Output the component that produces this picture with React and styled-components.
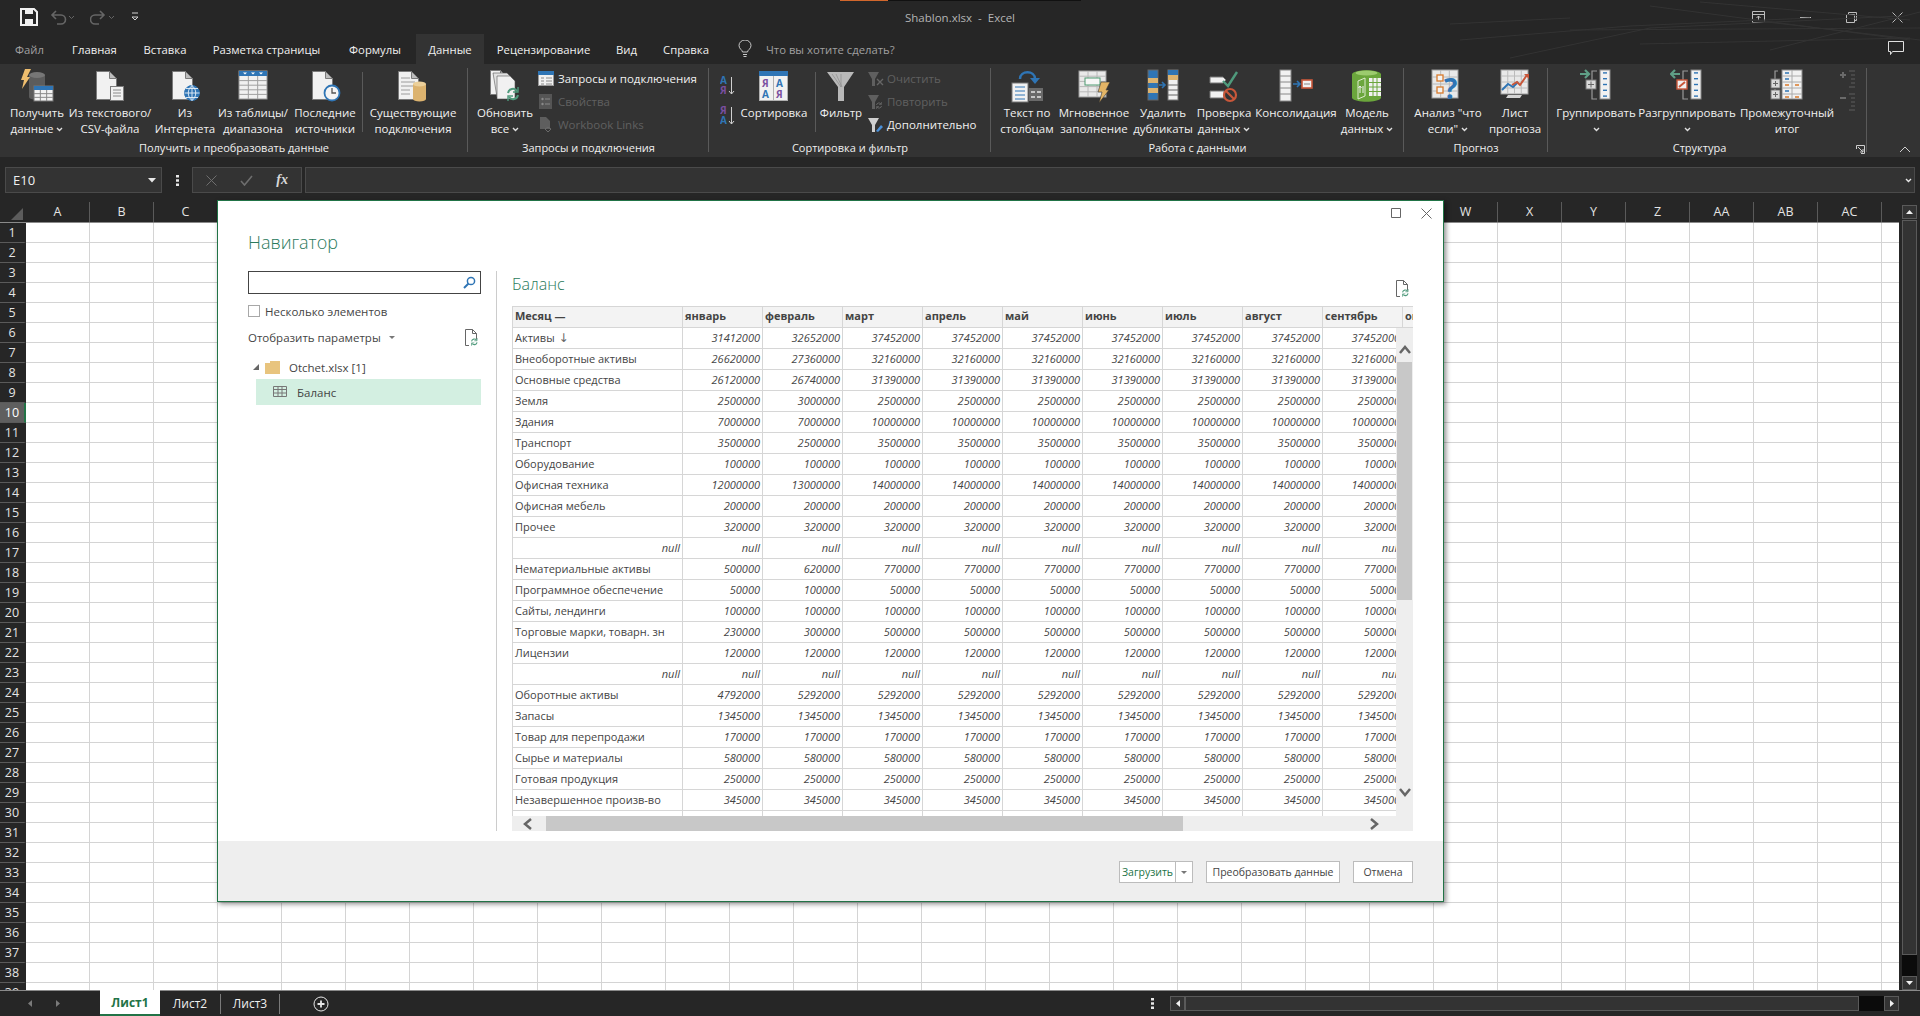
import React from 'react';
import styled, { createGlobalStyle } from 'styled-components';

const GlobalStyle = createGlobalStyle`
  html, body { margin: 0; padding: 0; background: #262626; }
  * { box-sizing: border-box; }
`;

const Window = styled.div`
  position: relative;
  width: 1920px;
  height: 1016px;
  overflow: hidden;
  display: flex;
  flex-direction: column;
  background: #262626;
  color: #f0f0f0;
  font-family: 'Open Sans', 'Noto Sans', sans-serif;
  font-size: 12px;
`;

/* title bar */
const TitleBar = styled.div`
  position: relative;
  height: 34px;
  flex: none;
  display: grid;
  grid-template-columns: 1fr auto 1fr;
  align-items: center;
`;

const QuickAccess = styled.div`
  display: flex;
  align-items: center;
  padding-left: 20px;
`;

const QuickSlot = styled.div`
  width: ${p => p.$w}px;
  flex: none;
  display: flex;
`;

const FileName = styled.div`
  color: #b4b4b4;
  font-size: 11.5px;
  white-space: pre;
`;

const WindowControls = styled.div`
  display: flex;
  justify-content: flex-end;
  align-items: center;
  gap: 35px;
  padding-right: 17px;
`;

const AccentLine = styled.div`
  position: absolute;
  left: 840px;
  top: 0;
  width: 241px;
  height: 1px;
  background: linear-gradient(to right, #d2672c 48px, #111 48px);
`;

const Texture = styled.svg`
  position: absolute;
  right: 0;
  top: 0;
  pointer-events: none;
`;

/* tabs */
const TabRow = styled.div`
  height: 30px;
  flex: none;
  display: flex;
  align-items: stretch;
  padding-left: 1px;
  font-size: 11.3px;
`;

const Tab = styled.div`
  width: ${p => p.$w}px;
  flex: none;
  display: flex;
  align-items: center;
  justify-content: center;
  white-space: nowrap;
  color: ${p => (p.$muted ? '#a0a0a0' : '#f0f0f0')};
  background: ${p => (p.$active ? '#333333' : 'transparent')};
`;

const TellMe = styled.div`
  display: flex;
  align-items: center;
  gap: 14px;
  margin-left: 16px;
  color: #a0a0a0;
`;

const CommentBox = styled.div`
  margin-left: auto;
  padding-right: 16px;
  display: flex;
  align-items: center;
`;

/* ribbon */
const Ribbon = styled.div`
  position: relative;
  height: 93px;
  flex: none;
  display: flex;
  background: #333333;
`;

const Group = styled.div`
  position: relative;
  width: ${p => p.$w}px;
  flex: none;
  display: flex;
  flex-direction: column;
  padding-top: 3px;
  &::after {
    content: '';
    position: absolute;
    right: 0;
    top: 4px;
    bottom: 5px;
    width: 1px;
    background: #5a5a5a;
  }
`;

const GroupBody = styled.div`
  height: 73px;
  display: flex;
  flex: none;
`;

const GroupLabel = styled.div`
  height: 16px;
  line-height: 16px;
  text-align: center;
  white-space: nowrap;
  font-size: 11px;
  padding-right: ${p => p.$pr || 0}px;
`;

const RibbonButton = styled.div`
  width: ${p => p.$w}px;
  margin-left: ${p => p.$ml || 0}px;
  flex: none;
  display: flex;
  flex-direction: column;
  align-items: center;
`;

const BigIcon = styled.div`
  height: 38px;
  flex: none;
  display: flex;
  align-items: center;
  justify-content: center;
`;

const ButtonLine = styled.div`
  height: 16px;
  line-height: 16px;
  white-space: nowrap;
  font-size: 11.5px;
  display: flex;
  align-items: center;
  gap: 3px;
`;

const RibbonDivider = styled.div`
  width: 1px;
  height: 60px;
  margin: 5px 0 0 ${p => p.$ml || 0}px;
  flex: none;
  background: #5a5a5a;
`;

const SmallStack = styled.div`
  display: flex;
  flex-direction: column;
  margin-left: ${p => p.$ml || 0}px;
  flex: none;
`;

const SmallRow = styled.div`
  height: 23px;
  display: flex;
  align-items: center;
  gap: ${p => p.$gap || 3}px;
  white-space: nowrap;
  font-size: 11.5px;
  color: ${p => (p.$off ? '#606060' : '#f0f0f0')};
`;

const SortPair = styled.div`
  width: 29px;
  margin-left: 4px;
  flex: none;
  display: flex;
  flex-direction: column;
  align-items: center;
  gap: 8px;
  padding-top: 8px;
`;

const Launcher = styled.div`
  position: absolute;
  right: 2px;
  bottom: 3px;
  display: flex;
`;

const Collapse = styled.div`
  position: absolute;
  left: 1899px;
  bottom: 4px;
  display: flex;
`;

/* formula bar */
const FormulaRow = styled.div`
  height: 26px;
  margin: 10px 0 9px;
  padding: 0 5px;
  flex: none;
  display: flex;
  align-items: stretch;
`;

const NameBox = styled.div`
  width: 157px;
  display: flex;
  align-items: center;
  justify-content: space-between;
  padding: 0 5px 0 7px;
  background: #333333;
  border: 1px solid #4a4a4a;
  font-size: 13px;
`;

const VDots = styled.div`
  width: 30px;
  display: flex;
  align-items: center;
  justify-content: center;
`;

const FxBox = styled.div`
  width: 110px;
  display: flex;
  align-items: center;
  justify-content: space-between;
  padding: 0 13px;
  background: #333333;
  border: 1px solid #4a4a4a;
`;

const FxLabel = styled.span`
  font-family: 'Liberation Serif', serif;
  font-style: italic;
  font-weight: 700;
  font-size: 14px;
  color: #d8d8d8;
`;

const FormulaInput = styled.div`
  flex: 1;
  margin-left: 3px;
  background: #333333;
  border: 1px solid #4a4a4a;
  display: flex;
  align-items: center;
  justify-content: flex-end;
  padding-right: 2px;
`;

/* sheet */
const SheetArea = styled.div`
  flex: 1;
  min-height: 0;
  display: flex;
`;

const SheetMain = styled.div`
  flex: 1;
  min-width: 0;
  display: flex;
  flex-direction: column;
`;

const ColHeadRow = styled.div`
  height: 21px;
  flex: none;
  display: flex;
  border-bottom: 1px solid #8a8a8a;
`;

const Corner = styled.div`
  width: 26px;
  flex: none;
  display: flex;
  justify-content: flex-end;
  align-items: flex-end;
  padding: 0 3px 2px 0;
`;

const ColHead = styled.div`
  width: 64px;
  flex: none;
  text-align: center;
  line-height: 19px;
  font-size: 12.5px;
  color: #e4e4e4;
  border-right: 1px solid #5a5a5a;
`;

const GridRow = styled.div`
  flex: 1;
  min-height: 0;
  display: flex;
  overflow: hidden;
`;

const RowHeads = styled.div`
  width: 26px;
  flex: none;
`;

const RowHead = styled.div`
  height: 20px;
  text-align: center;
  line-height: 19px;
  font-size: 12.5px;
  color: ${p => (p.$active ? '#ffffff' : '#e4e4e4')};
  border-bottom: 1px solid #5a5a5a;
  border-right: 2px solid ${p => (p.$active ? '#217346' : 'transparent')};
  background: ${p => (p.$active ? '#5f5f5f' : 'transparent')};
`;

const Cells = styled.div`
  flex: 1;
  background-color: #ffffff;
  background-image:
    linear-gradient(to right, #d4d4d4 1px, transparent 1px),
    linear-gradient(to bottom, #d4d4d4 1px, transparent 1px);
  background-size: 64px 20px;
  background-position: 63px 19px;
`;

const VScroll = styled.div`
  width: 21px;
  flex: none;
  padding: 3px 3px 0;
  display: flex;
  flex-direction: column;
`;

const ScrollBtn = styled.div`
  height: ${p => p.$h || 14}px;
  width: ${p => p.$w || 'auto'};
  flex: none;
  display: flex;
  align-items: center;
  justify-content: center;
  background: #333333;
  border: 1px solid #5a5a5a;
`;

const ScrollThumb = styled.div`
  flex: ${p => (p.$fill ? 1 : 'none')};
  width: ${p => (p.$w ? `${p.$w}px` : 'auto')};
  height: ${p => (p.$h ? `${p.$h}px` : 'auto')};
  margin-top: ${p => p.$mt || 0}px;
  background: #333333;
  border: 1px solid #5a5a5a;
`;

const ScrollTrack = styled.div`
  flex: ${p => (p.$fill ? 1 : 'none')};
  width: ${p => (p.$w ? `${p.$w}px` : 'auto')};
  height: ${p => (p.$h ? `${p.$h}px` : 'auto')};
  background: #0b0b0b;
`;

/* bottom bar */
const SheetBar = styled.div`
  height: 26px;
  flex: none;
  display: flex;
  align-items: stretch;
  border-top: 1px solid #8a8a8a;
`;

const SheetNav = styled.div`
  width: 100px;
  flex: none;
  display: flex;
  align-items: center;
  gap: 24px;
  padding-left: 28px;
`;

const SheetTab = styled.div`
  width: ${p => p.$w}px;
  flex: none;
  display: flex;
  align-items: center;
  justify-content: center;
  font-size: 12px;
  margin-top: -1px;
  color: ${p => (p.$active ? '#217346' : '#f0f0f0')};
  font-weight: ${p => (p.$active ? 700 : 400)};
  background: ${p => (p.$active ? '#ffffff' : 'transparent')};
  border-bottom: ${p => (p.$active ? '2px solid #217346' : 'none')};
`;

const TabDivider = styled.div`
  width: 1px;
  height: 20px;
  margin-top: 3px;
  flex: none;
  background: #7a7a7a;
`;

const AddSheet = styled.div`
  margin-left: 33px;
  display: flex;
  align-items: center;
`;

const HScrollWrap = styled.div`
  margin-left: auto;
  margin-right: 21px;
  display: flex;
  align-items: center;
`;

const BarDots = styled.div`
  width: 35px;
  display: flex;
  justify-content: center;
`;

const HScroll = styled.div`
  width: 729px;
  height: 15px;
  display: flex;
`;

/* dialog */
const Dialog = styled.div`
  position: absolute;
  left: 217px;
  top: 200px;
  width: 1227px;
  height: 702px;
  display: flex;
  flex-direction: column;
  background: #ffffff;
  border: 1px solid #217346;
  box-shadow: 2px 2px 5px rgba(0, 0, 0, 0.45);
  color: #444444;
  font-size: 11.5px;
`;

const DialogControls = styled.div`
  height: 24px;
  flex: none;
  display: flex;
  justify-content: flex-end;
  align-items: center;
  gap: 20px;
  padding: 0 11px 0 0;
`;

const DialogTitle = styled.div`
  height: 46px;
  flex: none;
  padding: 4px 0 0 30px;
  font-size: 18px;
  font-weight: 300;
  line-height: 26px;
  color: #2a7a5c;
`;

const Panes = styled.div`
  height: 560px;
  flex: none;
  display: flex;
  padding: 0 30px;
`;

const LeftPane = styled.div`
  width: 233px;
  flex: none;
  display: flex;
  flex-direction: column;
`;

const SearchBox = styled.div`
  height: 23px;
  flex: none;
  border: 1px solid #444444;
  display: flex;
  align-items: center;
  justify-content: flex-end;
  padding-right: 4px;
`;

const CheckRow = styled.div`
  height: 14px;
  margin-top: 10px;
  display: flex;
  align-items: center;
  gap: 5px;
  flex: none;
`;

const CheckBox = styled.div`
  width: 12px;
  height: 12px;
  border: 1px solid #a8a8a8;
`;

const OptionsRow = styled.div`
  height: 18px;
  margin-top: 10px;
  padding-right: 2px;
  display: flex;
  align-items: center;
  flex: none;
`;

const Caret = styled.span`
  margin-left: ${p => (p.$flush ? 0 : 8)}px;
  width: 0;
  height: 0;
  border-left: 3px solid transparent;
  border-right: 3px solid transparent;
  border-top: 3px solid #777777;
`;

const PushRight = styled.div`
  margin-left: auto;
  display: flex;
`;

const TreeRow = styled.div`
  height: ${p => p.$h || 24}px;
  margin-top: ${p => p.$mt || 0}px;
  margin-left: ${p => p.$ml || 0}px;
  padding-left: ${p => p.$pl || 0}px;
  display: flex;
  align-items: center;
  gap: ${p => p.$gap || 8}px;
  background: ${p => (p.$selected ? '#d3efe1' : 'transparent')};
  flex: none;
`;

const TreeLabel = styled.span`
  margin-left: 3px;
`;

const Splitter = styled.div`
  width: 1px;
  margin: 0 15px;
  flex: none;
  background: #cccccc;
`;

const RightPane = styled.div`
  flex: 1;
  min-width: 0;
  display: flex;
  flex-direction: column;
`;

const PreviewHead = styled.div`
  height: 35px;
  flex: none;
  display: flex;
  align-items: flex-start;
  justify-content: space-between;
  padding: 2px 3px 0 0;
  font-size: 16px;
  font-weight: 300;
  color: #2a7a5c;
  line-height: 22px;
  svg {
    margin-top: 7px;
  }
`;

const TableBox = styled.div`
  position: relative;
  height: 525px;
  overflow: hidden;
`;

const TableGrid = styled.div`
  display: grid;
  grid-template-columns: 171px 80px repeat(9, 80px);
  width: 1100px;
`;

const HeadCell = styled.div`
  height: 22px;
  line-height: 18px;
  padding-left: 2px;
  font-weight: 700;
  font-size: 11px;
  white-space: nowrap;
  overflow: hidden;
  color: #444444;
  background: #f3f3f3;
  border: 1px solid #d6d6d6;
  border-left-width: ${p => (p.$first ? 1 : 0)}px;
`;

const NameCell = styled.div`
  height: 21px;
  line-height: 20px;
  padding: 0 2px 0 2px;
  font-size: 11px;
  white-space: nowrap;
  overflow: hidden;
  font-style: ${p => (p.$null ? 'italic' : 'normal')};
  text-align: ${p => (p.$null ? 'right' : 'left')};
  border: solid #d6d6d6;
  border-width: 0 1px 1px 1px;
`;

const SortArrow = styled.span`
  font-family: 'DejaVu Sans', sans-serif;
  font-size: 12px;
  color: #666666;
`;

const NumCell = styled.div`
  height: 21px;
  line-height: 20px;
  padding-right: 2px;
  font-size: 11px;
  font-style: italic;
  text-align: right;
  white-space: nowrap;
  border: solid #d6d6d6;
  border-width: 0 1px 1px 0;
`;

const TableVScroll = styled.div`
  position: absolute;
  right: 0;
  top: 22px;
  bottom: 15px;
  width: 17px;
  padding: 0 1px;
  background: #eeeeee;
  display: flex;
  flex-direction: column;
  align-items: center;
`;

const VThumb = styled.div`
  width: 15px;
  height: 238px;
  flex: none;
  background: #c8c8c8;
`;

const TableHScroll = styled.div`
  position: absolute;
  left: 0;
  right: 0;
  bottom: 0;
  height: 15px;
  background: #eeeeee;
  display: flex;
  align-items: center;
`;

const HThumb = styled.div`
  width: 637px;
  height: 15px;
  flex: none;
  background: #c8c8c8;
`;

const ChevronSlot = styled.div`
  width: ${p => p.$w || 17}px;
  height: ${p => p.$h || 15}px;
  margin: ${p => p.$m || 0};
  padding: ${p => p.$p || 0};
  flex: none;
  display: flex;
  align-items: center;
  justify-content: center;
`;

const DialogFooter = styled.div`
  flex: 1;
  margin-top: 10px;
  display: flex;
  align-items: flex-start;
  justify-content: flex-end;
  gap: 13px;
  padding: 20px 30px 0 0;
  background: #eeeeee;
`;

const FootButton = styled.div`
  height: 22px;
  width: ${p => p.$w}px;
  display: flex;
  align-items: center;
  justify-content: center;
  background: #ffffff;
  border: 1px solid #bcbcbc;
  font-size: 10.5px;
  white-space: nowrap;
`;

const SplitButton = styled.div`
  height: 22px;
  width: 74px;
  display: flex;
  background: #ffffff;
  border: 1px solid #bcbcbc;
  font-size: 10.5px;
  color: #217346;
`;

const SplitMain = styled.div`
  flex: 1;
  display: flex;
  align-items: center;
  justify-content: center;
`;

const SplitArrow = styled.div`
  width: 17px;
  display: flex;
  align-items: center;
  justify-content: center;
  border-left: 1px solid #bcbcbc;
`;

/* icons */
const Svg = ({ s = 34, w, h, children }) => (
  <svg width={w || s} height={h || s} viewBox={`0 0 ${w || s} ${h || s}`} fill="none" style={{ display: 'block' }}>
    {children}
  </svg>
);

const Page = ({ x = 0, y = 0, w = 20, h = 28 }) => (
  <g>
    <path d={`M${x + 0.5} ${y + 0.5}h${w - 7}l7 7v${h - 7}h-${w}z`} fill="#f1f1f1" stroke="#7a7a7a" />
    <path d={`M${x + w - 6.5} ${y + 0.5}v7h7z`} fill="#bdbdbd" stroke="#7a7a7a" />
  </g>
);

const GridLines = ({ x, y, w, h, cols, rows, c = '#b5b5b5' }) => {
  const v = [];
  for (let i = 1; i < cols; i++) v.push(<path key={`v${i}`} d={`M${x + (w * i) / cols} ${y}v${h}`} stroke={c} />);
  for (let i = 1; i < rows; i++) v.push(<path key={`h${i}`} d={`M${x} ${y + (h * i) / rows}h${w}`} stroke={c} />);
  return <g>{v}</g>;
};

const Chevron = ({ c = '#e0e0e0' }) => (
  <svg width="7" height="5" viewBox="0 0 7 5" fill="none"><path d="M1 1l2.5 2.5L6 1" stroke={c} strokeWidth="1.4" /></svg>
);

const Refresh = ({ x, y, k = 1, c = '#4f9a7c' }) => (
  <g transform={`translate(${x} ${y}) scale(${k})`} stroke={c} strokeWidth="2" fill="none">
    <path d="M1 6a5 5 0 0 1 9-2" />
    <path d="M11 8a5 5 0 0 1-9 2" />
    <path d="M11 0v5h-5" strokeWidth="1.4" />
    <path d="M1 14v-5h5" strokeWidth="1.4" />
  </g>
);

const GetDataIcon = () => (
  <Svg s={34}>
    <path d="M9 6h16v22H9z" fill="#5c5c5c" />
    <ellipse cx="17" cy="6" rx="8" ry="3" fill="#767676" />
    <ellipse cx="17" cy="28" rx="8" ry="3" fill="#5c5c5c" />
    <path d="M5 0h6L7 8h3L2 20l2-9H1z" fill="#efbe6e" />
    <rect x="14" y="17" width="19" height="15" fill="#f3f3f3" stroke="#777" />
    <rect x="14" y="17" width="19" height="4" fill="#2f75b5" />
    <GridLines x={14} y={21} w={19} h={11} cols={3} rows={3} c="#8a8a8a" />
  </Svg>
);

const FromTextIcon = () => (
  <Svg s={34}>
    <Page x={3} y={2} w={20} h={28} />
    <rect x="17.5" y="17.500" width="13" height="14" fill="#f1f1f1" stroke="#7d7d7d" />
    <path d="M20 21h8M20 24h8M20 27h8" stroke="#8a8a8a" />
  </Svg>
);

const FromWebIcon = () => (
  <Svg s={34}>
    <Page x={4} y={2} w={20} h={28} />
    <circle cx="24" cy="24" r="7.500" fill="#2f75b5" stroke="#2f75b5" />
    <path d="M16.500 24h15M24 16.500v15M18 19.500h12M18 28.500h12M24 16.500c-5 4-5 11 0 15M24 16.500c5 4 5 11 0 15" stroke="#e8f0f8" strokeWidth="0.9" />
  </Svg>
);

const FromTableIcon = () => (
  <Svg s={34}>
    <rect x="3" y="2" width="28" height="28" fill="#f1f1f1" stroke="#9a9a9a" />
    <rect x="3" y="2" width="28" height="5" fill="#2f75b5" />
    <GridLines x={3} y={7} w={28} h={23} cols={3} rows={5} c="#a0a0a0" />
    <path d="M7 3.500h4l-2 2zM15 3.500h4l-2 2zM23 3.500h4l-2 2z" fill="#fff" />
  </Svg>
);

const RecentIcon = () => (
  <Svg s={34}>
    <Page x={4} y={2} w={20} h={28} />
    <circle cx="24" cy="24" r="7.500" fill="#f4f4f4" stroke="#2f75b5" strokeWidth="1.800" />
    <path d="M24 19v5h4" stroke="#555" strokeWidth="1.300" />
  </Svg>
);

const ExistingIcon = () => (
  <Svg s={34}>
    <Page x={2} y={2} w={20} h={28} />
    <path d="M5 9h9M5 13h14M5 17h14M5 21h9M5 25h9" stroke="#9c9c9c" />
    <path d="M17 15h13v15H17z" fill="#dcb36f" />
    <ellipse cx="23.500" cy="15" rx="6.500" ry="2.500" fill="#ecd09a" />
    <ellipse cx="23.500" cy="30" rx="6.500" ry="2.500" fill="#dcb36f" />
  </Svg>
);

const RefreshAllIcon = () => (
  <Svg s={34}>
    <Page x={2} y={1} w={17} h={24} />
    <path d="M5 4h14l4 4v20H9z" fill="#e2e2e2" stroke="#555" strokeWidth="0.6" />
    <path d="M9 7h13l5 5v18H9z" fill="#f1f1f1" stroke="#555" strokeWidth="0.6" />
    <Refresh x={19} y={18} k={1} />
  </Svg>
);

const QueriesIcon = () => (
  <Svg s={16}>
    <rect x="0.5" y="0.5" width="15" height="14" fill="#f1f1f1" stroke="#999" />
    <rect x="0" y="0" width="16" height="4" fill="#2f75b5" />
    <path d="M3 7h3M8 7h6M3 10h3M8 10h6M3 13h3M8 13h6" stroke="#8a8a8a" />
  </Svg>
);

const PropsIcon = () => (
  <Svg s={16}>
    <rect x="1" y="0" width="13" height="15" fill="#555" />
    <circle cx="4.5" cy="5" r="1.2" fill="#8a8a8a" />
    <circle cx="4.5" cy="10" r="1.2" fill="#8a8a8a" />
    <path d="M7 5h5M7 10h5" stroke="#8a8a8a" />
  </Svg>
);

const LinksIcon = () => (
  <Svg s={16}>
    <path d="M2 0h6l4 4v8H2z" fill="#5e5e5e" />
    <path d="M7 12l3-2 3 2-3 3z" stroke="#6a6a6a" />
  </Svg>
);

const SmallSortIcon = ({ top, bottom, topC, botC }) => (
  <Svg w={16} h={22}>
    <text x="0" y="9" fontSize="10" fontWeight="700" fill={topC} fontFamily="Open Sans">{top}</text>
    <text x="0" y="19" fontSize="10" fontWeight="700" fill={botC} fontFamily="Open Sans">{bottom}</text>
    <path d="M11.5 2v17M9 16l2.5 3 2.5-3" stroke="#cfcfcf" />
  </Svg>
);

const SortIcon = () => (
  <Svg s={30}>
    <rect x="0.5" y="0.5" width="28" height="29" fill="#f1f1f1" stroke="#b0b0b0" />
    <rect x="0" y="0" width="29" height="5" fill="#2f75b5" />
    <path d="M14.5 5v25" stroke="#b0b0b0" />
    <text x="3" y="16" fontSize="10" fontWeight="700" fill="#7a4fa0" fontFamily="Open Sans">Я</text>
    <text x="17" y="16" fontSize="10" fontWeight="700" fill="#2f75b5" fontFamily="Open Sans">А</text>
    <text x="3" y="27" fontSize="10" fontWeight="700" fill="#2f75b5" fontFamily="Open Sans">А</text>
    <text x="17" y="27" fontSize="10" fontWeight="700" fill="#7a4fa0" fontFamily="Open Sans">Я</text>
  </Svg>
);

const FilterIcon = () => (
  <Svg s={30}>
    <path d="M1 1h27L18 16v14h-6V16z" fill="#b9b9b9" />
    <path d="M6 3l9 13M10 3l6 13M15 3v13" stroke="#8d8d8d" strokeWidth="0.7" />
  </Svg>
);

const SmallFunnel = ({ children, off }) => (
  <Svg s={16}>
    <path d="M0 1h11L7 8v7H4V8z" fill={off ? '#5f5f5f' : '#cfcfcf'} />
    {children}
  </Svg>
);

const TextColumnsIcon = () => (
  <Svg s={34}>
    <path d="M10 10c0-9 15-9 15 0" stroke="#2f75b5" strokeWidth="2.5" />
    <path d="M20 9h10l-5 6z" fill="#2f75b5" />
    <rect x="2" y="14" width="16" height="19" fill="#f1f1f1" stroke="#777" />
    <path d="M5 18h10M5 22h10M5 26h10M5 30h10" stroke="#2f75b5" />
    <rect x="19" y="19" width="14" height="13" fill="#6a6a6a" />
    <path d="M21 23h4M27 23h4M21 28h4M27 28h4" stroke="#e6e6e6" strokeWidth="1.6" />
  </Svg>
);

const FlashFillIcon = () => (
  <Svg s={34}>
    <rect x="2" y="2" width="27" height="26" fill="#e9e9e9" stroke="#9c9c9c" />
    <GridLines x={2} y={2} w={27} h={26} cols={3} rows={5} c="#b8b8b8" />
    <rect x="8" y="9" width="15" height="7" fill="#f7f7f7" stroke="#4c9a70" />
    <path d="M24 13h9l-4 8h3L22 34l3-11h-4z" fill="#e3b566" stroke="#333" strokeWidth="0.6" />
  </Svg>
);

const RemoveDupIcon = () => (
  <Svg s={34}>
    <rect x="2" y="1" width="10" height="30" fill="#2f75b5" stroke="#666" />
    <rect x="2" y="9" width="10" height="5" fill="#dcb36f" />
    <rect x="2" y="19" width="10" height="5" fill="#dcb36f" />
    <rect x="22" y="1" width="10" height="30" fill="#f1f1f1" stroke="#777" />
    <rect x="22" y="1" width="10" height="5" fill="#2f75b5" />
    <rect x="22" y="6" width="10" height="5" fill="#dcb36f" />
    <path d="M22 16h10M22 21h10M22 26h10" stroke="#666" />
    <path d="M13 16h6M16 13l3 3-3 3" stroke="#2f75b5" strokeWidth="1.6" />
  </Svg>
);

const ValidationIcon = () => (
  <Svg s={34}>
    <path d="M3 8h13l3 3-3 3H3z" fill="#f1f1f1" stroke="#777" />
    <path d="M3 22h14v7H3z" fill="#f1f1f1" stroke="#777" />
    <path d="M16 12l5 5 9-14" stroke="#4f9a7c" strokeWidth="2.4" />
    <circle cx="23" cy="26" r="6" fill="#333" stroke="#c9573a" strokeWidth="2.2" />
    <path d="M19 22l8 8" stroke="#c9573a" strokeWidth="2.2" />
  </Svg>
);

const ConsolidateIcon = () => (
  <Svg s={34}>
    <rect x="1" y="1" width="11" height="31" fill="#f1f1f1" stroke="#888" />
    <path d="M1 7h11M1 13h11M1 19h11M1 25h11" stroke="#888" />
    <path d="M14 15h7M18 12l3 3-3 3" stroke="#2f75b5" strokeWidth="1.6" />
    <rect x="23" y="11" width="10" height="8" fill="#f1f1f1" stroke="#c9573a" strokeWidth="1.6" />
    <path d="M25 15h6" stroke="#888" />
  </Svg>
);

const ModelIcon = () => (
  <Svg s={34}>
    <path d="M2 5c3-5 26-5 29 0v24c-3 5-26 5-29 0z" fill="#6ba63c" />
    <ellipse cx="16.5" cy="4" rx="11" ry="2.6" fill="#9ccb6e" />
    <path d="M19 9h12v18H19z" fill="#f1f1f1" />
    <path d="M23 9v18M27 9v18M19 13.5h12M19 18h12M19 22.5h12" stroke="#6ba63c" />
    <path d="M8 12l7-3v18l-7 3z" stroke="#dfeccf" />
    <path d="M10 24v-7M8.5 19l1.5-2 1.5 2M13 17v7" stroke="#f1f1f1" />
  </Svg>
);

const WhatIfIcon = () => (
  <Svg s={34}>
    <rect x="1" y="1" width="26" height="28" fill="#e9e9e9" stroke="#9c9c9c" />
    <GridLines x={1} y={1} w={26} h={28} cols={3} rows={4} c="#b8b8b8" />
    <rect x="6" y="6" width="6" height="6" fill="#f4f4f4" stroke="#d97a2b" strokeWidth="1.3" />
    <rect x="6" y="18" width="6" height="6" fill="#f4f4f4" stroke="#d97a2b" strokeWidth="1.3" />
    <text x="13" y="30" fontSize="28" fontWeight="700" fill="#2f75b5" fontFamily="Open Sans">?</text>
  </Svg>
);

const ForecastIcon = () => (
  <Svg s={34}>
    <rect x="3" y="1" width="27" height="24" fill="#e9e9e9" stroke="#9c9c9c" />
    <GridLines x={3} y={1} w={27} h={24} cols={4} rows={4} c="#bcbcbc" />
    <path d="M4 21l6-6 5 3 5-5" stroke="#2f75b5" strokeWidth="2" />
    <path d="M14 16l5-3 3 3 7-10" stroke="#c9573a" strokeWidth="2" />
    <path d="M26 5h5v5z" fill="#c9573a" />
    <path d="M10 26h14l-2 3H8z" fill="#d4d4d4" />
  </Svg>
);

const OutlineColumn = ({ x, y = 1, w = 10, rows = 5, h = 29, c = '#2f75b5' }) => {
  const step = h / rows;
  const items = [];
  for (let i = 0; i < rows; i++) {
    items.push(<path key={i} d={`M${x + 3} ${y + step * i + step / 2}h${w - 6}`} stroke={c} strokeWidth="1.4" />);
  }
  return (
    <g>
      <rect x={x} y={y} width={w} height={h} fill="#f1f1f1" stroke="#8a8a8a" />
      {items}
    </g>
  );
};

const GroupIcon = () => (
  <Svg s={34}>
    <path d="M1 5h8M6 1l4 4-4 4" stroke="#5f9f86" strokeWidth="2.2" />
    <path d="M18 2h-5v28h5" stroke="#999" strokeWidth="1.2" />
    <rect x="7" y="11" width="10" height="9" fill="#d9d9d9" stroke="#777" />
    <path d="M9 15.5h6M12 12.5v6" stroke="#666" />
    <OutlineColumn x={21} />
  </Svg>
);

const UngroupIcon = () => (
  <Svg s={34}>
    <path d="M10 5H2M5 1L1 5l4 4" stroke="#5f9f86" strokeWidth="2.2" />
    <path d="M18 2h-5v28h5" stroke="#999" strokeWidth="1.2" />
    <rect x="7" y="11" width="10" height="9" fill="#f1f1f1" stroke="#c9573a" strokeWidth="1.4" />
    <path d="M9 18l6-5" stroke="#c9573a" strokeWidth="2" />
    <OutlineColumn x={21} />
  </Svg>
);

const SubtotalIcon = () => (
  <Svg s={34}>
    <path d="M8 2h-3v10M5 20v10" stroke="#999" strokeWidth="1.2" />
    <rect x="1" y="10" width="9" height="9" fill="#d9d9d9" stroke="#777" />
    <path d="M3 14.5h5M5.5 12v5" stroke="#666" />
    <rect x="1" y="21" width="9" height="9" fill="#d9d9d9" stroke="#777" />
    <path d="M3 25.5h5M5.5 23v5" stroke="#666" />
    <rect x="12" y="1" width="20" height="29" fill="#f1f1f1" stroke="#8a8a8a" />
    <path d="M22 1v29M12 7h20M12 13h20M12 19h20M12 25h20" stroke="#aaa" />
    <path d="M15 4h4M15 10h4M15 22h4" stroke="#2f75b5" strokeWidth="1.4" />
    <path d="M15 16h4M25 16h4M15 28h4M25 28h4" stroke="#d97a2b" strokeWidth="1.4" />
  </Svg>
);

const ShowHideIcon = ({ plus }) => (
  <Svg w={16} h={18}>
    <path d="M0 5h6" stroke="#6a6a6a" strokeWidth="2" />
    {plus && <path d="M3 2v6" stroke="#6a6a6a" strokeWidth="2" />}
    <path d="M9 1h6M11 5h4M11 9h4M11 13h4M9 17h6" stroke="#5f5f5f" />
  </Svg>
);

const DocRefreshIcon = () => (
  <Svg w={15} h={17}>
    <path d="M1.5 0.5h7l4 4v6M5 16.5H1.5V0.5" stroke="#666" />
    <path d="M8.5 0.5v4h4" stroke="#666" />
    <Refresh x={7} y={9} k={0.55} />
  </Svg>
);

const CloseX = ({ c = '#777', s = 11 }) => (
  <svg width={s} height={s} viewBox="0 0 11 11" fill="none"><path d="M0.5 0.5l10 10M10.5 0.5l-10 10" stroke={c} /></svg>
);

const MONTHS = ['январь', 'февраль', 'март', 'апрель', 'май', 'июнь', 'июль', 'август', 'сентябрь', 'октябрь'];

const ROWS = [
  ['Активы', 31412000, 32652000, 37452000],
  ['Внеоборотные активы', 26620000, 27360000, 32160000],
  ['Основные средства', 26120000, 26740000, 31390000],
  ['Земля', 2500000, 3000000, 2500000],
  ['Здания', 7000000, 7000000, 10000000],
  ['Транспорт', 3500000, 2500000, 3500000],
  ['Оборудование', 100000, 100000, 100000],
  ['Офисная техника', 12000000, 13000000, 14000000],
  ['Офисная мебель', 200000, 200000, 200000],
  ['Прочее', 320000, 320000, 320000],
  ['null', 'null', 'null', 'null'],
  ['Нематериальные активы', 500000, 620000, 770000],
  ['Программное обеспечение', 50000, 100000, 50000],
  ['Сайты, лендинги', 100000, 100000, 100000],
  ['Торговые марки, товарн. зн', 230000, 300000, 500000],
  ['Лицензии', 120000, 120000, 120000],
  ['null', 'null', 'null', 'null'],
  ['Оборотные активы', 4792000, 5292000, 5292000],
  ['Запасы', 1345000, 1345000, 1345000],
  ['Товар для перепродажи', 170000, 170000, 170000],
  ['Сырье и материалы', 580000, 580000, 580000],
  ['Готовая продукция', 250000, 250000, 250000],
  ['Незавершенное произв-во', 345000, 345000, 345000],
  ['', '', '', ''],
];

const COLS = 'A B C D E F G H I J K L M N O P Q R S T U V W X Y Z AA AB AC'.split(' ');
const ROW_NUMBERS = Array.from({ length: 39 }, (_, i) => i + 1);

function BigButton({ w, ml, icon, lines, chevron }) {
  return (
    <RibbonButton $w={w} $ml={ml}>
      <BigIcon>{icon}</BigIcon>
      {lines.map((line, i) => (
        <ButtonLine key={i}>
          {line}
          {chevron && i === lines.length - 1 && <Chevron />}
        </ButtonLine>
      ))}
    </RibbonButton>
  );
}

function PreviewTable() {
  return (
    <TableGrid>
      <HeadCell $first>Месяц —</HeadCell>
      {MONTHS.map(m => <HeadCell key={m}>{m}</HeadCell>)}
      {ROWS.map(([name, jan, feb, rest], i) => (
        <React.Fragment key={i}>
          <NameCell $null={name === 'null'}>
            {name}
            {i === 0 && <SortArrow> ↓</SortArrow>}
          </NameCell>
          <NumCell>{jan}</NumCell>
          <NumCell>{feb}</NumCell>
          {MONTHS.slice(2).map(m => <NumCell key={m}>{rest}</NumCell>)}
        </React.Fragment>
      ))}
    </TableGrid>
  );
}

export default function App() {
  return (
    <Window>
      <GlobalStyle />
      <TitleBar>
        <AccentLine />
        <Texture width="470" height="64" viewBox="0 0 470 64" stroke="#333333" fill="none">
          <path d="M0 24l120-6M10 40l170-14 180-8M60 58l140-30 250-12M200 6l260 34M250 2l210 18M320 50l150-38M120 30l350-2M190 44l270-6M300 20l170 20" />
        </Texture>
        <QuickAccess>
          <QuickSlot $w={30}>
            <Svg w={18} h={18}>
              <path d="M1 1h13l3 3v13H1z" stroke="#f0f0f0" strokeWidth="2" />
              <rect x="5" y="1" width="8" height="5" fill="#f0f0f0" />
              <rect x="5" y="11" width="8" height="6" fill="#f0f0f0" />
            </Svg>
          </QuickSlot>
          <QuickSlot $w={40}>
            <Svg w={24} h={16}>
              <path d="M3 6h8a4 4 0 0 1 0 9H7M6 2L2 6l4 4" stroke="#666" strokeWidth="1.6" />
              <path d="M19 7l2.5 2.5L24 7" stroke="#666" />
            </Svg>
          </QuickSlot>
          <QuickSlot $w={41}>
            <Svg w={24} h={16}>
              <path d="M13 6H5a4 4 0 0 0 0 9h4M10 2l4 4-4 4" stroke="#666" strokeWidth="1.6" />
              <path d="M19 7l2.5 2.5L24 7" stroke="#666" />
            </Svg>
          </QuickSlot>
          <Svg w={8} h={10}>
            <path d="M1 1h6M1 5h6l-3 3z" stroke="#d0d0d0" />
          </Svg>
        </QuickAccess>
        <FileName>Shablon.xlsx  -  Excel</FileName>
        <WindowControls>
          <Svg w={13} h={12}>
            <path d="M0.5 0.5h12v11h-12zM0.5 3.500h12M6.500 10V5M4.500 7l2-2 2 2" stroke="#bdbdbd" />
          </Svg>
          <Svg w={11} h={11}><path d="M0 5.500h11" stroke="#bdbdbd" /></Svg>
          <Svg w={11} h={11}>
            <path d="M0.500 2.500h8v8h-8zM2.500 2.500v-2h8v8h-2" stroke="#bdbdbd" />
          </Svg>
          <CloseX c="#bdbdbd" />
        </WindowControls>
      </TitleBar>

      <TabRow>
        <Tab $w={57} $muted>Файл</Tab>
        <Tab $w={73}>Главная</Tab>
        <Tab $w={68}>Вставка</Tab>
        <Tab $w={135}>Разметка страницы</Tab>
        <Tab $w={82}>Формулы</Tab>
        <Tab $w={68} $active>Данные</Tab>
        <Tab $w={119}>Рецензирование</Tab>
        <Tab $w={47}>Вид</Tab>
        <Tab $w={72}>Справка</Tab>
        <TellMe>
          <Svg w={14} h={18}>
            <path d="M4.500 12c0-2-3.500-3-3.500-6.500a6 5.500 0 0 1 12 0C13 9 9.500 10 9.500 12zM5 14.500h4M5.500 16.500h3" stroke="#c8c8c8" />
          </Svg>
          Что вы хотите сделать?
        </TellMe>
        <CommentBox>
          <Svg w={16} h={16}>
            <path d="M0.500 0.500h15v10h-11l-2 3v-3h-2z" stroke="#e0e0e0" />
          </Svg>
        </CommentBox>
      </TabRow>

      <Ribbon>
        <Group $w={468}>
          <GroupBody>
            <BigButton w={74} icon={<GetDataIcon />} lines={['Получить', 'данные']} chevron />
            <BigButton w={72} icon={<FromTextIcon />} lines={['Из текстового/', 'CSV-файла']} />
            <BigButton w={78} icon={<FromWebIcon />} lines={['Из', 'Интернета']} />
            <BigButton w={58} icon={<FromTableIcon />} lines={['Из таблицы/', 'диапазона']} />
            <BigButton w={74} ml={6} icon={<RecentIcon />} lines={['Последние', 'источники']} />
            <RibbonDivider />
            <BigButton w={100} icon={<ExistingIcon />} lines={['Существующие', 'подключения']} />
          </GroupBody>
          <GroupLabel>Получить и преобразовать данные</GroupLabel>
        </Group>

        <Group $w={241}>
          <GroupBody>
            <BigButton w={66} ml={4} icon={<RefreshAllIcon />} lines={['Обновить', 'все']} chevron />
            <SmallStack>
              <SmallRow $gap={4}><QueriesIcon />Запросы и подключения</SmallRow>
              <SmallRow $off $gap={4}><PropsIcon />Свойства</SmallRow>
              <SmallRow $off $gap={4}><LinksIcon />Workbook Links</SmallRow>
            </SmallStack>
          </GroupBody>
          <GroupLabel>Запросы и подключения</GroupLabel>
        </Group>

        <Group $w={282}>
          <GroupBody>
            <SortPair>
              <SmallSortIcon top="А" bottom="Я" topC="#2f75b5" botC="#7a4fa0" />
              <SmallSortIcon top="Я" bottom="А" topC="#7a4fa0" botC="#2f75b5" />
            </SortPair>
            <BigButton w={64} icon={<SortIcon />} lines={['Сортировка']} />
            <RibbonDivider $ml={9} />
            <BigButton w={50} icon={<FilterIcon />} lines={['Фильтр']} />
            <SmallStack $ml={2}>
              <SmallRow $off>
                <SmallFunnel off><path d="M9 8l6 6M15 8l-6 6" stroke="#666" strokeWidth="1.4" /></SmallFunnel>
                Очистить
              </SmallRow>
              <SmallRow $off>
                <SmallFunnel off><Refresh x={8} y={8} k={0.5} c="#666" /></SmallFunnel>
                Повторить
              </SmallRow>
              <SmallRow>
                <SmallFunnel><path d="M8 14l5-6 2 2-5 5z" fill="#4a90d9" /></SmallFunnel>
                Дополнительно
              </SmallRow>
            </SmallStack>
          </GroupBody>
          <GroupLabel>Сортировка и фильтр</GroupLabel>
        </Group>

        <Group $w={413}>
          <GroupBody>
            <BigButton w={72} icon={<TextColumnsIcon />} lines={['Текст по', 'столбцам']} />
            <BigButton w={62} icon={<FlashFillIcon />} lines={['Мгновенное', 'заполнение']} />
            <BigButton w={76} icon={<RemoveDupIcon />} lines={['Удалить', 'дубликаты']} />
            <BigButton w={46} icon={<ValidationIcon />} lines={['Проверка', 'данных']} chevron />
            <BigButton w={98} icon={<ConsolidateIcon />} lines={['Консолидация']} />
            <BigButton w={44} icon={<ModelIcon />} lines={['Модель', 'данных']} chevron />
          </GroupBody>
          <GroupLabel>Работа с данными</GroupLabel>
        </Group>

        <Group $w={144}>
          <GroupBody>
            <BigButton w={88} icon={<WhatIfIcon />} lines={['Анализ "что', 'если"']} chevron />
            <BigButton w={46} icon={<ForecastIcon />} lines={['Лист', 'прогноза']} />
          </GroupBody>
          <GroupLabel>Прогноз</GroupLabel>
        </Group>

        <Group $w={319}>
          <GroupBody>
            <BigButton w={96} icon={<GroupIcon />} lines={['Группировать', '']} chevron />
            <BigButton w={86} icon={<UngroupIcon />} lines={['Разгруппировать', '']} chevron />
            <BigButton w={104} ml={5} icon={<SubtotalIcon />} lines={['Промежуточный', 'итог']} />
            <SmallStack $ml={1}>
              <SmallRow><ShowHideIcon plus /></SmallRow>
              <SmallRow><ShowHideIcon /></SmallRow>
            </SmallStack>
          </GroupBody>
          <GroupLabel $pr={16}>Структура</GroupLabel>
          <Launcher>
            <Svg w={9} h={9}><path d="M0.500 4V0.500H8.500V8.500H5M2 2l5 5M4 7h3V4" stroke="#cfcfcf" /></Svg>
          </Launcher>
        </Group>
        <Collapse>
          <Svg w={12} h={7}><path d="M1 6l5-5 5 5" stroke="#cfcfcf" /></Svg>
        </Collapse>
      </Ribbon>

      <FormulaRow>
        <NameBox>
          E10
          <Svg w={8} h={5}><path d="M0 0h8L4 4.500z" fill="#e8e8e8" /></Svg>
        </NameBox>
        <VDots>
          <Svg w={3} h={11}><path d="M0 0h3v2.500H0zM0 4.200h3v2.500H0zM0 8.500h3V11H0z" fill="#e8e8e8" /></Svg>
        </VDots>
        <FxBox>
          <CloseX c="#6e6e6e" s={11} />
          <Svg w={13} h={11}><path d="M1 6l3.500 4L12 1" stroke="#6e6e6e" strokeWidth="1.600" /></Svg>
          <FxLabel>fx</FxLabel>
        </FxBox>
        <FormulaInput>
          <Chevron c="#e8e8e8" />
        </FormulaInput>
      </FormulaRow>

      <SheetArea>
        <SheetMain>
          <ColHeadRow>
            <Corner>
              <Svg s={12}><path d="M12 0v12H0z" fill="#5c5c5c" /></Svg>
            </Corner>
            {COLS.map(c => <ColHead key={c}>{c}</ColHead>)}
          </ColHeadRow>
          <GridRow>
            <RowHeads>
              {ROW_NUMBERS.map(n => <RowHead key={n} $active={n === 10}>{n}</RowHead>)}
            </RowHeads>
            <Cells />
          </GridRow>
        </SheetMain>
        <VScroll>
          <ScrollBtn>
            <Svg w={7} h={4}><path d="M3.500 0L7 4H0z" fill="#f0f0f0" /></Svg>
          </ScrollBtn>
          <ScrollThumb $fill $mt={1} />
          <ScrollTrack $h={21} />
          <ScrollBtn>
            <Svg w={7} h={4}><path d="M3.500 4L7 0H0z" fill="#f0f0f0" /></Svg>
          </ScrollBtn>
        </VScroll>
      </SheetArea>

      <SheetBar>
        <SheetNav>
          <Svg w={4} h={7}><path d="M4 0v7L0 3.500z" fill="#7a7a7a" /></Svg>
          <Svg w={4} h={7}><path d="M0 0v7l4-3.500z" fill="#7a7a7a" /></Svg>
        </SheetNav>
        <SheetTab $w={60} $active>Лист1</SheetTab>
        <SheetTab $w={60}>Лист2</SheetTab>
        <TabDivider />
        <SheetTab $w={58}>Лист3</SheetTab>
        <TabDivider />
        <AddSheet>
          <Svg s={16}>
            <circle cx="8" cy="8" r="7" stroke="#e8e8e8" />
            <path d="M8 4.500v7M4.500 8h7" stroke="#e8e8e8" strokeWidth="1.800" />
          </Svg>
        </AddSheet>
        <HScrollWrap>
          <BarDots>
            <Svg w={3} h={11}><path d="M0 0h3v2.500H0zM0 4.200h3v2.500H0zM0 8.500h3V11H0z" fill="#e8e8e8" /></Svg>
          </BarDots>
          <HScroll>
            <ScrollBtn $h={15} $w="15px">
              <Svg w={4} h={7}><path d="M4 0v7L0 3.500z" fill="#f0f0f0" /></Svg>
            </ScrollBtn>
            <ScrollThumb $w={674} $h={15} />
            <ScrollTrack $fill />
            <ScrollBtn $h={15} $w="15px">
              <Svg w={4} h={7}><path d="M0 0v7l4-3.500z" fill="#f0f0f0" /></Svg>
            </ScrollBtn>
          </HScroll>
        </HScrollWrap>
      </SheetBar>

      <Dialog>
        <DialogControls>
          <Svg w={10} h={10}><path d="M0.500 0.500h9v9h-9z" stroke="#666" /></Svg>
          <CloseX c="#666" s={11} />
        </DialogControls>
        <DialogTitle>Навигатор</DialogTitle>
        <Panes>
          <LeftPane>
            <SearchBox>
              <Svg w={13} h={13}>
                <circle cx="8" cy="5" r="3.600" stroke="#2f75b5" strokeWidth="1.500" />
                <path d="M5.500 7.500L1 12" stroke="#2f75b5" strokeWidth="2" />
              </Svg>
            </SearchBox>
            <CheckRow><CheckBox />Несколько элементов</CheckRow>
            <OptionsRow>
              Отобразить параметры
              <Caret />
              <PushRight><DocRefreshIcon /></PushRight>
            </OptionsRow>
            <TreeRow $mt={9} $pl={5} $gap={6}>
              <Svg w={6} h={6}><path d="M6 0v6H0z" fill="#666" /></Svg>
              <Svg w={15} h={13}><path d="M0 2h5V0h10v13H0z" fill="#e8c47e" /></Svg>
              <TreeLabel>Otchet.xlsx [1]</TreeLabel>
            </TreeRow>
            <TreeRow $ml={8} $pl={17} $gap={10} $h={26} $selected>
              <Svg w={14} h={13}>
                <path d="M0.500 0.500h13v10h-13zM0.500 3.500h13M0.500 7h13M5 0.500v10M9 0.500v10" stroke="#777" />
              </Svg>
              Баланс
            </TreeRow>
          </LeftPane>
          <Splitter />
          <RightPane>
            <PreviewHead>
              Баланс
              <DocRefreshIcon />
            </PreviewHead>
            <TableBox>
              <PreviewTable />
              <TableVScroll>
                <ChevronSlot $h={34} $w={15} $p="8px 0 0">
                  <Svg w={12} h={9}><path d="M1 8l5-6 5 6" stroke="#666" strokeWidth="2.500" /></Svg>
                </ChevronSlot>
                <VThumb />
                <ChevronSlot $w={15} $h={16} $m="184px 0 0">
                  <Svg w={12} h={9}><path d="M1 1l5 6 5-6" stroke="#666" strokeWidth="2.500" /></Svg>
                </ChevronSlot>
              </TableVScroll>
              <TableHScroll>
                <ChevronSlot $w={34} $p="0 3px 0 0">
                  <Svg w={9} h={12}><path d="M8 1L2 6l6 5" stroke="#666" strokeWidth="2.500" /></Svg>
                </ChevronSlot>
                <HThumb />
                <ChevronSlot $w={10} $m="0 0 0 186px">
                  <Svg w={9} h={12}><path d="M1 1l6 5-6 5" stroke="#666" strokeWidth="2.500" /></Svg>
                </ChevronSlot>
              </TableHScroll>
            </TableBox>
          </RightPane>
        </Panes>
        <DialogFooter>
          <SplitButton>
            <SplitMain>Загрузить</SplitMain>
            <SplitArrow><Caret $flush /></SplitArrow>
          </SplitButton>
          <FootButton $w={134}>Преобразовать данные</FootButton>
          <FootButton $w={60}>Отмена</FootButton>
        </DialogFooter>
      </Dialog>
    </Window>
  );
}
